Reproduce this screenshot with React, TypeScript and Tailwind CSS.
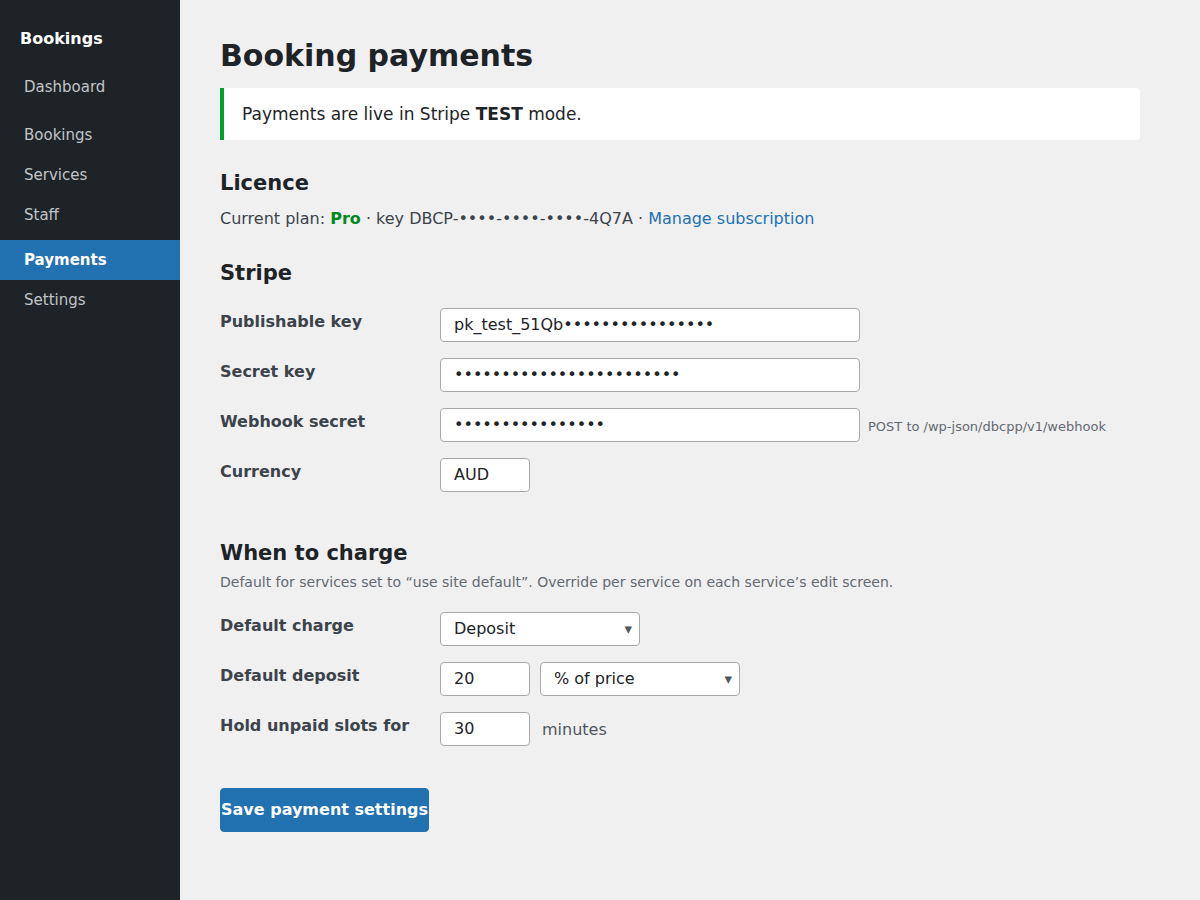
import React from 'react';

const nav = [
  { label: 'Dashboard', cls: 'mb-2' },
  { label: 'Bookings', cls: '' },
  { label: 'Services', cls: '' },
  { label: 'Staff', cls: '' },
];

function Field({ value, width }: { value: string; width: string }) {
  return (
    <div
      className={`${width} h-[34px] flex items-center px-[13px] bg-white border border-[#a7aaad] rounded-[4px] text-[16px] text-[#1d2327]`}
    >
      {value}
    </div>
  );
}

function Select({ value, width }: { value: string; width: string }) {
  return (
    <div
      className={`${width} relative h-[34px] flex items-center px-[13px] bg-white border border-[#a7aaad] rounded-[4px] text-[16px] text-[#1d2327]`}
    >
      {value}
      <span className="absolute right-[7px] top-[8px] text-[15px] leading-[16px] text-[#50575e]">▾</span>
    </div>
  );
}

function Row({ label, children }: { label: string; children: React.ReactNode }) {
  return (
    <div className="flex items-start">
      <div className="w-[220px] shrink-0 pt-[2px] leading-[24px] text-[16px] font-bold text-[#3c434a]">{label}</div>
      <div className="flex items-center gap-[10px]">{children}</div>
    </div>
  );
}

export default function App() {
  return (
    <div className="flex min-h-[900px] bg-[#f0f0f1] font-['DejaVu_Sans',sans-serif]">
      <aside className="w-[180px] shrink-0 bg-[#1d2327]">
        <div className="pt-[27px] px-[20px] text-[16px] leading-[24px] font-bold text-white">Bookings</div>
        <nav className="mt-[16px]">
          {nav.map((n) => (
            <div key={n.label} className={`h-[40px] flex items-center px-[24px] text-[15px] text-[#c3c4c7] ${n.cls}`}>
              {n.label}
            </div>
          ))}
          <div className="mt-[5px] h-[40px] flex items-center px-[24px] text-[15px] font-bold text-white bg-[#2271b1]">
            Payments
          </div>
          <div className="h-[40px] flex items-center px-[24px] text-[15px] text-[#c3c4c7]">Settings</div>
        </nav>
      </aside>

      <main className="flex-1 pl-[40px] pr-[60px] pt-[38px] text-[#3c434a]">
        <h1 className="text-[30px] leading-[36px] font-bold text-[#1d2327]">Booking payments</h1>

        <div className="mt-[14px] bg-white border-l-4 border-[#00a32a] rounded-r-[4px] px-[18px] py-[14px] text-[17px] leading-[24px] text-[#1d2327]">
          Payments are live in Stripe <b>TEST</b> mode.
        </div>

        <h2 className="mt-[29px] text-[21px] leading-[28px] font-bold text-[#1d2327]">Licence</h2>
        <p className="mt-[10px] text-[16px] leading-[24px]">
          Current plan: <b className="text-[#008a20]">Pro</b> · key DBCP-••••-••••-••••-4Q7A ·{' '}
          <a className="text-[#2271b1]">Manage subscription</a>
        </p>

        <h2 className="mt-[28px] text-[21px] leading-[28px] font-bold text-[#1d2327]">Stripe</h2>

        <div className="mt-[21px] flex flex-col gap-[16px]">
          <Row label="Publishable key">
            <Field value="pk_test_51Qb••••••••••••••••" width="w-[420px]" />
          </Row>
          <Row label="Secret key">
            <Field value="••••••••••••••••••••••••" width="w-[420px]" />
          </Row>
          <Row label="Webhook secret">
            <Field value="••••••••••••••••" width="w-[420px]" />
            <span className="-ml-[2px] mt-[3px] text-[13px] text-[#646970]">POST to /wp-json/dbcpp/v1/webhook</span>
          </Row>
          <Row label="Currency">
            <Field value="AUD" width="w-[90px]" />
          </Row>
        </div>

        <h2 className="mt-[47px] text-[21px] leading-[28px] font-bold text-[#1d2327]">When to charge</h2>
        <p className="mt-[5px] text-[14px] leading-[20px] text-[#646970]">
          Default for services set to “use site default”. Override per service on each service’s edit screen.
        </p>

        <div className="mt-[20px] flex flex-col gap-[16px]">
          <Row label="Default charge">
            <Select value="Deposit" width="w-[200px]" />
          </Row>
          <Row label="Default deposit">
            <Field value="20" width="w-[90px]" />
            <Select value="% of price" width="w-[200px]" />
          </Row>
          <Row label="Hold unpaid slots for">
            <Field value="30" width="w-[90px]" />
            <span className="ml-[2px] mt-[1px] text-[16px] text-[#50575e]">minutes</span>
          </Row>
        </div>

        <button className="mt-[42px] h-[44px] px-0 border border-[#2271b1] rounded-[4px] bg-[#2271b1] text-white text-[16px] font-bold">
          Save payment settings
        </button>
      </main>
    </div>
  );
}
